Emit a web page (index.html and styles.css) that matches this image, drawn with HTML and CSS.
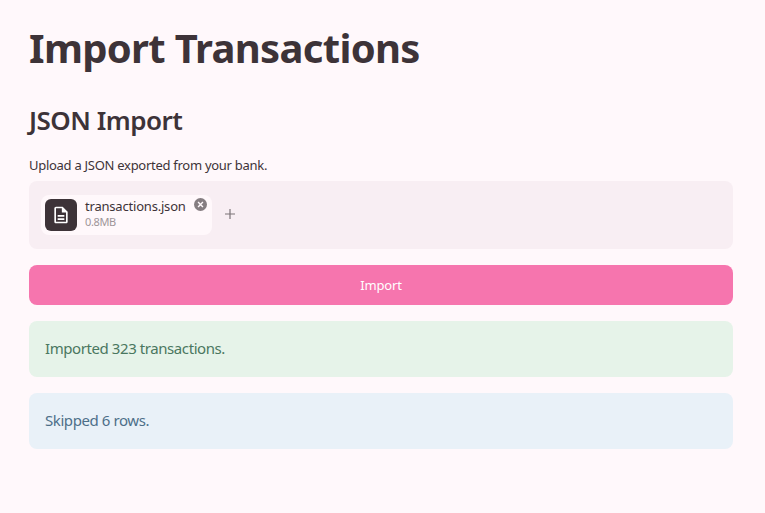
FILE: index.html
```html
<!DOCTYPE html>
<html lang="en">
<head>
    <meta charset="UTF-8">
    <meta name="viewport" content="width=device-width, initial-scale=1.0">
    <title>Import Transactions</title>
    <link rel="stylesheet" href="styles.css">
</head>
<body>
    <div class="container">
        <h1>Import Transactions</h1>
        <h2>JSON Import</h2>

        <label class="upload-label">Upload a JSON exported from your bank.</label>
        <div class="dropzone">
            <div class="file-chip">
                <div class="file-icon">
                    <svg viewBox="0 0 24 24">
                        <path d="M14 2H6c-1.1 0-2 .9-2 2v16c0 1.1.9 2 2 2h12c1.1 0 2-.9 2-2V8l-6-6zm4 18H6V4h7v5h5v11zM8 12h8v2H8v-2zm0 4h8v2H8v-2z" />
                    </svg>
                </div>
                <div class="file-info">
                    <div class="file-name">transactions.json</div>
                    <div class="file-size">0.8MB</div>
                </div>
                <button class="file-remove">
                    <svg viewBox="0 0 24 24">
                        <circle cx="12" cy="12" r="12" />
                        <path class="cross" d="M7.5 7.5l9 9M16.5 7.5l-9 9" />
                    </svg>
                </button>
            </div>
            <button class="add-file">
                <svg viewBox="0 0 12 12">
                    <path d="M6 1v10M1 6h10" />
                </svg>
            </button>
        </div>

        <button class="import-button">Import</button>

        <div class="alert alert-success">Imported 323 transactions.</div>
        <div class="alert alert-info">Skipped 6 rows.</div>
    </div>
</body>
</html>
```

FILE: styles.css
```css
body {
    font-family: "Noto Sans", "Open Sans", sans-serif;
    margin: 0;
    background-color: #fff8fb;
    color: #3d3338;
}

.container {
    padding: 20px 32px 0 29px;
}

h1 {
    margin: 0;
    font-size: 40px;
    line-height: 56px;
    font-weight: 700;
    letter-spacing: -0.68px;
}

h2 {
    margin: 28px 0 0;
    font-size: 26px;
    line-height: 32px;
    font-weight: 600;
    letter-spacing: -0.5px;
}

.upload-label {
    display: block;
    margin-top: 20px;
    font-size: 13px;
    line-height: 18px;
    letter-spacing: -0.28px;
}

.dropzone {
    display: flex;
    align-items: center;
    gap: 12px;
    height: 68px;
    margin-top: 7px;
    padding-left: 12px;
    background-color: #f8eef3;
    border-radius: 8px;
}

.file-chip {
    position: relative;
    display: flex;
    align-items: center;
    gap: 8px;
    width: 171px;
    height: 40px;
    box-sizing: border-box;
    padding-left: 4px;
    background-color: #fff8fb;
    border-radius: 8px;
}

.file-icon {
    display: flex;
    justify-content: center;
    align-items: center;
    width: 32px;
    height: 32px;
    background-color: #3d3338;
    border-radius: 6px;
}

.file-icon svg {
    width: 20px;
    height: 20px;
    fill: white;
}

.file-info {
    padding-bottom: 4px;
}

.file-name {
    font-size: 13px;
    line-height: 17px;
    letter-spacing: -0.2px;
}

.file-size {
    font-size: 11px;
    line-height: 14px;
    color: #9e9599;
    letter-spacing: -0.35px;
}

.file-remove {
    position: absolute;
    top: 3px;
    right: 5px;
    width: 13px;
    height: 13px;
    padding: 0;
    border: none;
    background: none;
}

.file-remove svg {
    display: block;
    fill: #857d81;
}

.file-remove .cross {
    stroke: #fff8fb;
    stroke-width: 2.6;
    fill: none;
}

.add-file {
    width: 12px;
    height: 12px;
    padding: 0;
    margin-bottom: 2px;
    border: none;
    background: none;
}

.add-file svg {
    display: block;
    stroke: #7b7377;
    stroke-width: 1.2;
    fill: none;
}

.import-button {
    display: block;
    width: 100%;
    height: 40px;
    margin-top: 16px;
    border: none;
    border-radius: 8px;
    background-color: #f675ae;
    color: white;
    font-family: inherit;
    font-size: 13px;
    letter-spacing: -0.2px;
}

.alert {
    height: 56px;
    box-sizing: border-box;
    margin-top: 16px;
    padding: 15px 16px;
    border-radius: 8px;
    font-size: 15px;
    line-height: 24px;
    letter-spacing: -0.42px;
}

.alert-success {
    background-color: #e6f3e9;
    color: #4a7760;
}

.alert-info {
    background-color: #e9f1f8;
    color: #4d6f89;
}
```
